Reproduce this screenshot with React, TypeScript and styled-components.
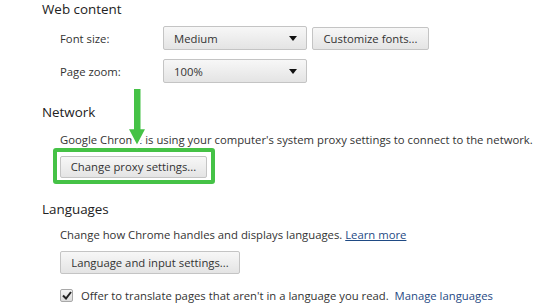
import React from "react";
import styled, { createGlobalStyle } from "styled-components";

const GlobalStyle = createGlobalStyle`
  html, body {
    margin: 0;
    padding: 0;
    background: #ffffff;
  }
  body {
    font-family: "Open Sans", "Noto Sans", Arial, sans-serif;
    color: #303030;
  }
`;

const Page = styled.div`
  width: 541px;
  height: 305px;
  overflow: hidden;
  padding: 0 0 0 42px;
  box-sizing: border-box;
`;

const Section = styled.section<{ $top: number }>`
  display: flex;
  flex-direction: column;
  padding-top: ${(p) => p.$top}px;
`;

const Heading = styled.h3`
  margin: 0;
  height: 20px;
  font-size: 13.4px;
  font-weight: 400;
  line-height: 17px;
  color: #222;
`;

const Body = styled.div`
  display: flex;
  flex-direction: column;
  padding-left: 18px;
`;

const FieldRow = styled.div<{ $top: number }>`
  display: flex;
  align-items: center;
  height: 24px;
  margin-top: ${(p) => p.$top}px;
`;

const FieldLabel = styled.label`
  width: 103px;
  font-size: 11.3px;
  color: #333;
`;

const SelectBox = styled.div`
  display: flex;
  align-items: center;
  justify-content: space-between;
  width: 144px;
  height: 24px;
  box-sizing: border-box;
  padding: 0 9px 0 10px;
  border: 1px solid #c4c4c4;
  border-radius: 2px;
  background: linear-gradient(#f7f7f7, #e4e4e4);
  font-size: 11.3px;
  color: #333;
`;

const Caret = styled.span`
  width: 0;
  height: 0;
  border-left: 4px solid transparent;
  border-right: 4px solid transparent;
  border-top: 5px solid #111;
`;

const Button = styled.button<{ $width: number; $height?: number }>`
  width: ${(p) => p.$width}px;
  height: ${(p) => p.$height ?? 23}px;
  box-sizing: border-box;
  padding: 0;
  border: 1px solid #c4c4c4;
  border-radius: 2px;
  background: linear-gradient(#f7f7f7, #e4e4e4);
  font-family: inherit;
  font-size: 11.3px;
  color: #333;
  text-align: center;
`;

const Text = styled.p`
  margin: 0;
  font-size: 11.3px;
  line-height: 16px;
  color: #333;
  white-space: nowrap;
`;

const Link = styled.a<{ $underline?: boolean }>`
  color: #1f4a84;
  text-decoration: ${(p) => (p.$underline ? "underline" : "none")};
`;

const Highlight = styled.div`
  align-self: flex-start;
  margin-left: -7px;
  padding: 2px 4px 2px 3px;
  border: 4px solid #45c246;
  border-radius: 3px;
`;

const ArrowLayer = styled.div`
  position: relative;
  height: 0;
`;

const Arrow = styled.svg`
  position: absolute;
  left: 65px;
  top: -59px;
`;

const CheckRow = styled.label`
  display: flex;
  align-items: center;
  gap: 8px;
  margin-top: 14px;
  font-size: 11.3px;
  color: #333;
  white-space: nowrap;
`;

const CheckBox = styled.span`
  display: flex;
  align-items: center;
  justify-content: center;
  width: 13px;
  height: 13px;
  box-sizing: border-box;
  border: 1px solid #a8a8a8;
  border-radius: 2px;
  background: linear-gradient(#f4f4f4, #dcdcdc);
`;

const App: React.FC = function () {
  return (
    <>
      <GlobalStyle />
      <Page>
        <Section $top={1}>
          <Heading>Web content</Heading>
          <Body>
            <FieldRow $top={5}>
              <FieldLabel>Font size:</FieldLabel>
              <SelectBox>
                Medium
                <Caret />
              </SelectBox>
              <Button $width={117} style={{ marginLeft: 5 }}>
                Customize fonts...
              </Button>
            </FieldRow>
            <FieldRow $top={9}>
              <FieldLabel>Page zoom:</FieldLabel>
              <SelectBox>
                100%
                <Caret />
              </SelectBox>
            </FieldRow>
          </Body>
        </Section>

        <Section $top={21}>
          <Heading>Network</Heading>
          <Body>
            <Text style={{ marginTop: 8 }}>
              Google Chrome is using your computer's system proxy settings to connect to the network.
            </Text>
            <ArrowLayer>
              {/* green pointer drawn over the text, with a white halo round its head */}
              <Arrow width="24" height="60" viewBox="0 0 24 60">
                <polygon points="2,39 22,39 12,58" fill="#45c246" stroke="#fff" strokeWidth="2.5" strokeLinejoin="round" />
                <rect x="9" y="0" width="6.5" height="42" fill="#45c246" />
              </Arrow>
            </ArrowLayer>
            <Highlight>
              <Button $width={147} $height={22}>
                Change proxy settings...
              </Button>
            </Highlight>
          </Body>
        </Section>

        <Section $top={17}>
          <Heading>Languages</Heading>
          <Body>
            <Text style={{ marginTop: 6 }}>
              Change how Chrome handles and displays languages.{" "}
              <Link $underline>Learn more</Link>
            </Text>
            <Button $width={180} style={{ marginTop: 8 }}>
              Language and input settings...
            </Button>
            <CheckRow>
              <CheckBox>
                <svg width="10" height="9" viewBox="0 0 10 9">
                  <path d="M1 4.5 L4 7.5 L9 1" fill="none" stroke="#222" strokeWidth="2" />
                </svg>
              </CheckBox>
              <span>
                Offer to translate pages that aren't in a language you read.{" "}
                <Link>&nbsp;Manage languages</Link>
              </span>
            </CheckRow>
          </Body>
        </Section>
      </Page>
    </>
  );
};

export default App;
